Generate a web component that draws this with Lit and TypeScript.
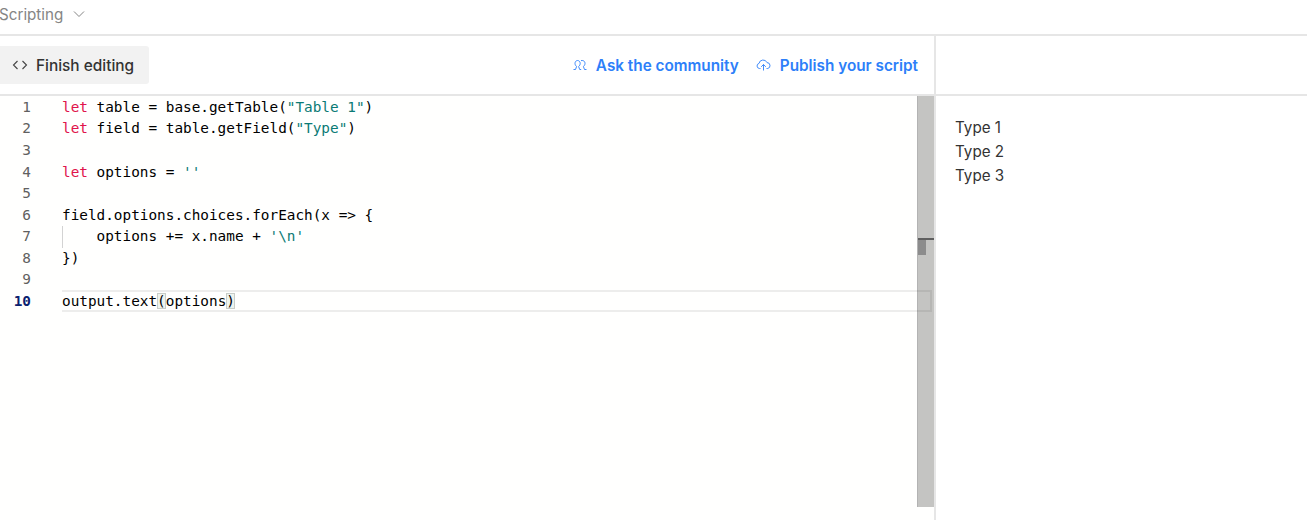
import { LitElement, html, css } from "lit";
import { customElement } from "lit/decorators.js";

type Tok = [string, string?];
const LINES: Tok[][] = [
  [["let", "kw"], [" table = base.getTable("], ['"Table 1"', "str"], [")"]],
  [["let", "kw"], [" field = table.getField("], ['"Type"', "str"], [")"]],
  [],
  [["let", "kw"], [" options = "], ["''", "str"]],
  [],
  [["field.options.choices.forEach(x => {"]],
  [["    options += x.name + "], ["'\\n'", "str"]],
  [["})"]],
  [],
  [["output.text"], ["(", "br"], ["options"], [")", "br"]],
];

@customElement("app-root")
export class AppRoot extends LitElement {
  static styles = css`
    :host {
      display: block;
      width: 1307px;
      height: 520px;
      overflow: hidden;
      background: #fff;
      font-family: "Inter", "Liberation Sans", sans-serif;
    }
    .top {
      border-bottom: 2px solid #e6e6e6;
      display: flex;
      align-items: center;
      gap: 10px;
      margin-left: -1px;
      padding-bottom: 6px;
      box-sizing: border-box;
      height: 36px;
      color: #858585;
      font-size: 15.2px;
    }
    .main {
      display: flex;
      height: 484px;
    }
    .left {
      width: 934px;
      border-right: 2px solid #e6e6e6;
      display: flex;
      flex-direction: column;
    }
    .right {
      flex: 1;
      display: flex;
      flex-direction: column;
    }
    .bar {
      height: 58px;
      flex: none;
      border-bottom: 2px solid #e6e6e6;
      display: flex;
      align-items: center;
    }
    .left .bar {
      padding-right: 16px;
      gap: 17px;
    }
    .finish {
      height: 38px;
      width: 149px;
      margin-top: -1px;
      box-sizing: border-box;
      background: #f2f2f2;
      border-radius: 0 3px 3px 0;
      display: flex;
      align-items: center;
      gap: 8px;
      padding: 1px 0 0 12px;
      color: #333;
      font-size: 15.4px;
      font-weight: 500;
      margin-right: auto;
    }
    .link {
      display: flex;
      align-items: center;
      gap: 9px;
      color: #2d7ff9;
      font-size: 15.3px;
      font-weight: 600;
    }
    .editor {
      flex: 1;
      position: relative;
      background: #fffffe;
      padding-top: 0.9px;
      font-family: "DejaVu Sans Mono", monospace;
      font-size: 14.37px;
      line-height: 21.55px;
      color: #000;
    }
    .row {
      display: flex;
      height: 21.55px;
      white-space: pre;
    }
    .num {
      width: 31px;
      text-align: right;
      color: #606060;
      flex: none;
      margin-right: 31px;
      font-size: 14.37px;
    }
    .num.active {
      color: #0b216f;
      font-weight: 700;
    }
    .code {
      flex: 1;
      position: relative;
    }
    .current {
      z-index: 1;
      margin-right: 2px;
      border: 2px solid rgba(0, 0, 0, 0.07);
      border-left: 0;
      margin-top: -1px;
      line-height: 18px;
      height: 18px;
    }
    .kw { color: #e0144c; }
    .str { color: #0b7a75; }
    .br {
      background: #eef3ee;
      outline: 1px solid #c8cdc8;
      outline-offset: -1px;
    }
    .guide {
      position: absolute;
      left: 62px;
      top: 130px;
      width: 1px;
      height: 21.67px;
      background: #d3d3d3;
    }
    .scroll {
      position: absolute;
      left: 917px;
      top: 0;
      width: 17px;
      height: 411px;
      background: #c4c4c2;
      border-left: 1px solid #b3b3b3;
      box-sizing: border-box;
    }
    .mark {
      position: absolute;
      left: 0;
      right: 0;
      top: 142px;
      height: 2px;
      background: #5f5f5f;
    }
    .thumb {
      position: absolute;
      left: 0;
      top: 144px;
      width: 8px;
      height: 15px;
      background: #8c8c8c;
    }
    .output {
      padding: 20px 19px;
      color: #333;
      font-size: 15.2px;
      line-height: 24px;
    }
  `;

  render() {
    return html`
      <div class="top">
        <span>Scripting</span>
        <svg width="12" height="12" viewBox="0 0 12 12" fill="none" stroke="#858585" stroke-width="1">
          <path d="M1 3.5 6 8.5 11 3.5" />
        </svg>
      </div>
      <div class="main">
        <div class="left">
          <div class="bar">
            <div class="finish">
              <svg width="16" height="12" viewBox="0 0 16 12" fill="none" stroke="#444" stroke-width="1.1">
                <path d="M5.5 2 1.5 6 5.5 10M10.5 2 14.5 6 10.5 10" />
              </svg>
              Finish editing
            </div>
            <div class="link">
              <svg width="14" height="12" viewBox="0 0 14 12" fill="none" stroke="#2d7ff9" stroke-width="0.9">
                <path d="M0.5 10.5H2.5L3.6 7.5C2.6 6.8 2 5.6 2 4.4 2 2.7 3.2 1.5 4.6 1.5S7.2 2.7 7.2 4.4C7.2 5.6 6.6 6.8 5.6 7.5L6.7 10.5H8.2" />
                <path d="M8 1.6C8.4 1.5 8.8 1.5 9.2 1.5 10.8 1.5 12 2.7 12 4.4 12 5.6 11.4 6.8 10.4 7.5L11.5 10.5H13.5" />
              </svg>
              Ask the community
            </div>
            <div class="link">
              <svg width="15" height="12" viewBox="0 0 15 12" fill="none" stroke="#2d7ff9" stroke-width="0.9">
                <path d="M4.5 9.5H3.4A2.6 2.6 0 0 1 3 4.4 4.2 4.2 0 0 1 11 3.6 3 3 0 0 1 11.8 9.5H10.5" />
                <path d="M7.5 11.5V5.5M5.2 7.8 7.5 5.5 9.8 7.8" />
              </svg>
              Publish your script
            </div>
          </div>
          <div class="editor">
            ${LINES.map(
              (toks, i) => html`<div class="row">
                <span class="num ${i === 9 ? "active" : ""}">${i + 1}</span>
                <span class="code ${i === 9 ? "current" : ""}">${toks.map(
                  ([t, c]) => html`<span class=${c ?? ""}>${t}</span>`
                )}</span>
              </div>`
            )}
            <div class="guide"></div>
            <div class="scroll"><div class="mark"></div><div class="thumb"></div></div>
          </div>
        </div>
        <div class="right">
          <div class="bar"></div>
          <div class="output">
            <div>Type 1</div>
            <div>Type 2</div>
            <div>Type 3</div>
          </div>
        </div>
      </div>
    `;
  }
}
